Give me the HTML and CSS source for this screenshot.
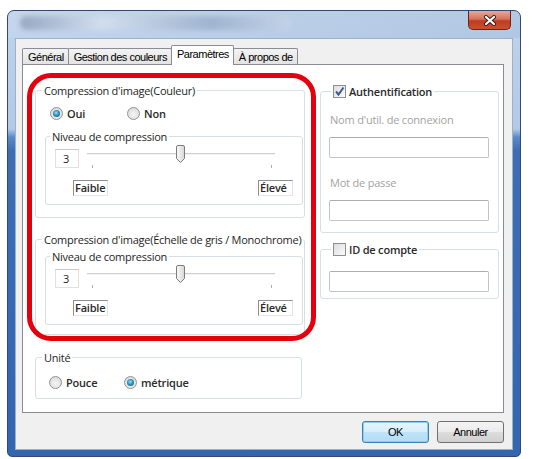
FILE: index.html
```html
<!DOCTYPE html>
<html lang="fr">
<head>
<meta charset="utf-8">
<title>Paramètres</title>
<link rel="stylesheet" href="styles.css">
</head>
<body>
<div class="window">
  <div class="titlebar">
    <div class="title-blur"></div>
    <div class="close">
      <svg width="14" height="11" viewBox="0 0 14 11"><path d="M3 2 L11 9 M11 2 L3 9" stroke="#3a1a12" stroke-width="4" stroke-linecap="round"/><path d="M3 2 L11 9 M11 2 L3 9" stroke="#ffffff" stroke-width="2.2" stroke-linecap="round"/></svg>
    </div>
  </div>
  <div class="client">
    <div class="tabs">
      <div class="tab">Général</div>
      <div class="tab">Gestion des couleurs</div>
      <div class="tab active">Paramètres</div>
      <div class="tab">À propos de</div>
    </div>
    <div class="panel">
      <div class="col-left">
        <div class="group g-main">
          <div class="gtitle">Compression d'image(Couleur)</div>
          <div class="radio-row">
            <div class="opt"><span class="radio checked"></span><span class="opt-label">Oui</span></div>
            <div class="opt"><span class="radio"></span><span class="opt-label">Non</span></div>
          </div>
          <div class="group g-level">
            <div class="gtitle">Niveau de compression</div>
            <div class="slider-row">
              <div class="numbox">3</div>
              <div class="slider">
                <div class="track"></div>
                <svg class="thumb" width="11" height="19" viewBox="0 0 11 19"><defs><linearGradient id="tg1" x1="0" y1="0" x2="1" y2="0"><stop offset="0" stop-color="#fbfbfb"/><stop offset="1" stop-color="#d6d6d6"/></linearGradient></defs><path d="M1.5 2 Q1.5 .5 3 .5 H8 Q9.5 .5 9.5 2 V13.5 L5.5 17.5 L1.5 13.5 Z" fill="url(#tg1)" stroke="#7c7c7c"/></svg>
                <span class="tick tick-start"></span>
                <span class="tick tick-end"></span>
              </div>
            </div>
            <div class="scale-row"><span class="scale">Faible</span><span class="scale">Élevé</span></div>
          </div>
        </div>
        <div class="group g-main g-gray">
          <div class="gtitle">Compression d'image(Échelle de gris / Monochrome)</div>
          <div class="group g-level g-level2">
            <div class="gtitle">Niveau de compression</div>
            <div class="slider-row">
              <div class="numbox">3</div>
              <div class="slider">
                <div class="track"></div>
                <svg class="thumb" width="11" height="19" viewBox="0 0 11 19"><defs><linearGradient id="tg2" x1="0" y1="0" x2="1" y2="0"><stop offset="0" stop-color="#fbfbfb"/><stop offset="1" stop-color="#d6d6d6"/></linearGradient></defs><path d="M1.5 2 Q1.5 .5 3 .5 H8 Q9.5 .5 9.5 2 V13.5 L5.5 17.5 L1.5 13.5 Z" fill="url(#tg2)" stroke="#7c7c7c"/></svg>
                <span class="tick tick-start"></span>
                <span class="tick tick-end"></span>
              </div>
            </div>
            <div class="scale-row"><span class="scale">Faible</span><span class="scale">Élevé</span></div>
          </div>
        </div>
        <div class="group g-unit">
          <div class="gtitle">Unité</div>
          <div class="radio-row">
            <div class="opt opt-unit"><span class="radio"></span><span class="opt-label">Pouce</span></div>
            <div class="opt opt-unit"><span class="radio checked"></span><span class="opt-label">métrique</span></div>
          </div>
        </div>
      </div>
      <div class="col-right">
        <div class="group g-auth">
          <div class="gtitle gtitle-check"><span class="check checked"><svg width="11" height="11" viewBox="0 0 11 11"><path d="M2 5.5 L4.5 8.5 L9.5 1.5" fill="none" stroke="#3e5a92" stroke-width="2"/></svg></span><span class="opt-label">Authentification</span></div>
          <div class="field-label">Nom d'util. de connexion</div>
          <div class="input"></div>
          <div class="field-label field-label2">Mot de passe</div>
          <div class="input"></div>
        </div>
        <div class="group g-id">
          <div class="gtitle gtitle-check"><span class="check"></span><span class="opt-label">ID de compte</span></div>
          <div class="input input-id"></div>
        </div>
      </div>
      <div class="highlight"></div>
    </div>
    <div class="buttons">
      <div class="btn btn-default">OK</div>
      <div class="btn">Annuler</div>
    </div>
  </div>
</div>
</body>
</html>
```
FILE: styles.css
```css
html, body {
  margin: 0;
  padding: 0;
  background: #ffffff;
}
body {
  font-family: "Open Sans", "Liberation Sans", sans-serif;
  font-size: 11px;
  color: #1e1e1e;
}
.window {
  margin: 10px 0 0 7px;
  width: 514px;
  height: 447px;
  box-sizing: border-box;
  border: 1px solid #2f4a6e;
  border-radius: 7px 7px 5px 5px;
  background: linear-gradient(to bottom, #c0d3eb 0px, #b3c9e6 118px, #5c8ac8 126px, #3c6db5 140px, #3466b0 100%);
  display: flex;
  flex-direction: column;
  overflow: hidden;
}
.titlebar {
  height: 27px;
  flex: none;
  display: flex;
  align-items: flex-start;
  justify-content: space-between;
  padding: 0 9px 0 12px;
  background: linear-gradient(to right, rgba(255,255,255,0.08), rgba(110,140,185,0.15));
}
.title-blur {
  width: 272px;
  height: 14px;
  margin-top: 5px;
  border-radius: 7px;
  background: linear-gradient(to right, rgba(140,156,184,0.8), rgba(210,222,238,0.95) 30%, rgba(150,170,198,0.75) 70%, rgba(200,214,234,0.6));
  filter: blur(2.5px);
}
.close {
  width: 43px;
  height: 19px;
  box-sizing: border-box;
  border: 1px solid #6a2417;
  border-top: none;
  border-radius: 0 0 5px 5px;
  background: linear-gradient(to bottom, #e8a999 0%, #d4725c 45%, #c23b1f 55%, #c9512e 100%);
  display: flex;
  align-items: center;
  justify-content: center;
}
.close svg { display: block; }
.client {
  flex: 1;
  margin: 0 7px 6px 7px;
  border: 1px solid #9db1cc;
  background: #f0f0f0;
  display: flex;
  flex-direction: column;
  padding: 7px 8px 4px 6px;
}
.tabs {
  display: flex;
  align-items: flex-end;
  height: 18px;
  font-family: "Liberation Sans", Arial, sans-serif;
  font-size: 11px;
  letter-spacing: -0.5px;
  color: #000;
}
.tab {
  height: 16px;
  box-sizing: border-box;
  padding: 1px 4px 0 5px;
  border: 1px solid #898c95;
  border-bottom: none;
  margin-left: -1px;
  background: linear-gradient(to bottom, #f3f3f3, #e3e3e3);
  line-height: 14px;
  border-radius: 2px 2px 0 0;
}
.tab:first-child { margin-left: 0; }
.tab.active {
  height: 20px;
  margin-bottom: -1px;
  background: #ffffff;
  position: relative;
  z-index: 1;
  padding-top: 1px;
}
.panel {
  height: 349px;
  flex: none;
  box-sizing: border-box;
  border: 1px solid #898c95;
  background: #ffffff;
  display: flex;
  position: relative;
}
.col-left {
  margin-left: 12px;
  padding-top: 25px;
  width: 270px;
  display: flex;
  flex-direction: column;
}
.col-right {
  margin-left: 15px;
  padding-top: 26px;
  width: 179px;
  display: flex;
  flex-direction: column;
}
.group {
  border: 1px solid #d5dfe5;
  border-radius: 3px;
  display: flex;
  flex-direction: column;
  align-items: stretch;
}
.gtitle {
  align-self: flex-start;
  height: 15px;
  line-height: 15px;
  margin: -8px 0 0 5px;
  padding: 0 2px;
  background: #ffffff;
  white-space: nowrap;
  letter-spacing: -0.25px;
}
.g-main {
  padding: 0 1px 12px 9px;
}
.g-main > .gtitle { margin-left: -3px; }
.radio-row {
  display: flex;
  align-items: center;
  height: 14px;
  margin-top: 8px;
  padding-left: 5px;
}
.opt {
  display: flex;
  align-items: center;
  width: 77px;
}
.opt-unit { width: 75px; }
.opt-label {
  margin-left: 4px;
  font-weight: 600;
  letter-spacing: -0.2px;
  color: #2a2a2a;
}
.radio {
  width: 13px;
  height: 13px;
  box-sizing: border-box;
  border-radius: 50%;
  border: 1px solid #929292;
  background: radial-gradient(circle at 50% 60%, #f4f4f4 0, #e4e4e4 55%, #cfcfcf 100%);
  display: flex;
  align-items: center;
  justify-content: center;
}
.radio.checked::after {
  content: "";
  width: 7px;
  height: 7px;
  border-radius: 50%;
  background: radial-gradient(circle at 45% 40%, #9be3fb 0, #2c95c4 45%, #12506e 100%);
}
.g-level {
  margin-top: 16px;
  padding: 0 8px 8px 0;
}
.g-level > .gtitle { margin-left: 4px; }
.g-level2 { margin-top: 9px; }
.slider-row {
  display: flex;
  align-items: flex-start;
  margin-top: 1px;
}
.numbox {
  margin: 4px 0 0 9px;
  width: 24px;
  height: 19px;
  box-sizing: border-box;
  border: 1px solid #e0e0e0;
  border-top-color: #c9c9c9;
  padding-left: 7px;
  line-height: 17px;
  font-size: 11px;
}
.slider {
  position: relative;
  margin-left: 8px;
  width: 188px;
  height: 23px;
}
.track {
  margin-top: 8px;
  height: 1px;
  background: #cfcfcf;
  border-bottom: 1px solid #f2f2f2;
}
.thumb {
  position: absolute;
  left: 88px;
  top: 0;
  display: block;
}
.tick {
  position: absolute;
  top: 20px;
  width: 1px;
  height: 3px;
  background: #b0b0b0;
}
.tick-start { left: 5px; }
.tick-end { left: 184px; }
.scale-row {
  display: flex;
  justify-content: space-between;
  margin-top: 12px;
  padding: 0 1px 0 27px;
}
.scale {
  width: 35px;
  height: 16px;
  box-sizing: border-box;
  border-left: 1px solid #8e8e8e;
  border-top: 1px solid #8e8e8e;
  border-right: 1px solid #e6e6e6;
  border-bottom: 1px solid #e6e6e6;
  line-height: 14px;
  padding-left: 1px;
  font-weight: 600;
  letter-spacing: -0.2px;
  color: #2a2a2a;
}
.g-gray {
  margin-top: 21px;
  padding-bottom: 9px;
}
.g-unit {
  margin-top: 22px;
  width: 267px;
  box-sizing: border-box;
  padding: 0 0 9px 9px;
}
.g-unit > .gtitle { margin-left: -3px; }
.g-unit .radio-row { margin-top: 10px; padding-left: 4px; }
.g-auth {
  padding: 0 0 11px 0;
}
.gtitle-check {
  display: flex;
  align-items: center;
  margin-left: 10px;
}
.gtitle-check .opt-label { margin-left: 3px; }
.check {
  width: 13px;
  height: 13px;
  box-sizing: border-box;
  border: 1px solid #8f8f8f;
  background: linear-gradient(135deg, #dcdcdc, #fbfbfb);
  display: flex;
  align-items: center;
  justify-content: center;
}
.check svg { display: block; }
.field-label {
  margin: 13px 0 0 9px;
  height: 15px;
  line-height: 15px;
  color: #a3a3a3;
  letter-spacing: -0.2px;
}
.field-label2 { margin-top: 17px; }
.input {
  margin: 10px 0 0 8px;
  width: 160px;
  height: 21px;
  box-sizing: border-box;
  border: 1px solid #c4c4c4;
  border-top-color: #adadad;
  border-radius: 2px;
  background: #ffffff;
}
.g-id {
  margin-top: 16px;
  padding-bottom: 6px;
}
.input-id { margin-top: 14px; }
.highlight {
  position: absolute;
  left: 4px;
  top: 8px;
  width: 289px;
  height: 268px;
  box-sizing: border-box;
  border: 5px solid #e5000d;
  border-radius: 24px;
  pointer-events: none;
}
.buttons {
  display: flex;
  justify-content: flex-end;
  gap: 8px;
  margin-top: 8px;
}
.btn {
  width: 67px;
  height: 22px;
  box-sizing: border-box;
  border: 1px solid #707070;
  border-radius: 3px;
  background: linear-gradient(to bottom, #f4f4f4 0%, #ebebeb 48%, #dddddd 52%, #cfcfcf 100%);
  display: flex;
  align-items: center;
  justify-content: center;
  font-family: "Liberation Sans", Arial, sans-serif;
  font-size: 11px;
  letter-spacing: -0.5px;
  color: #000;
}
.btn-default {
  border-color: #3c7fb1;
  background: linear-gradient(to bottom, #e9f5fc 0%, #d6eefb 48%, #bfe3f7 52%, #b1dcf4 100%);
  box-shadow: inset 0 0 0 1px #8fd0ef;
}
```
